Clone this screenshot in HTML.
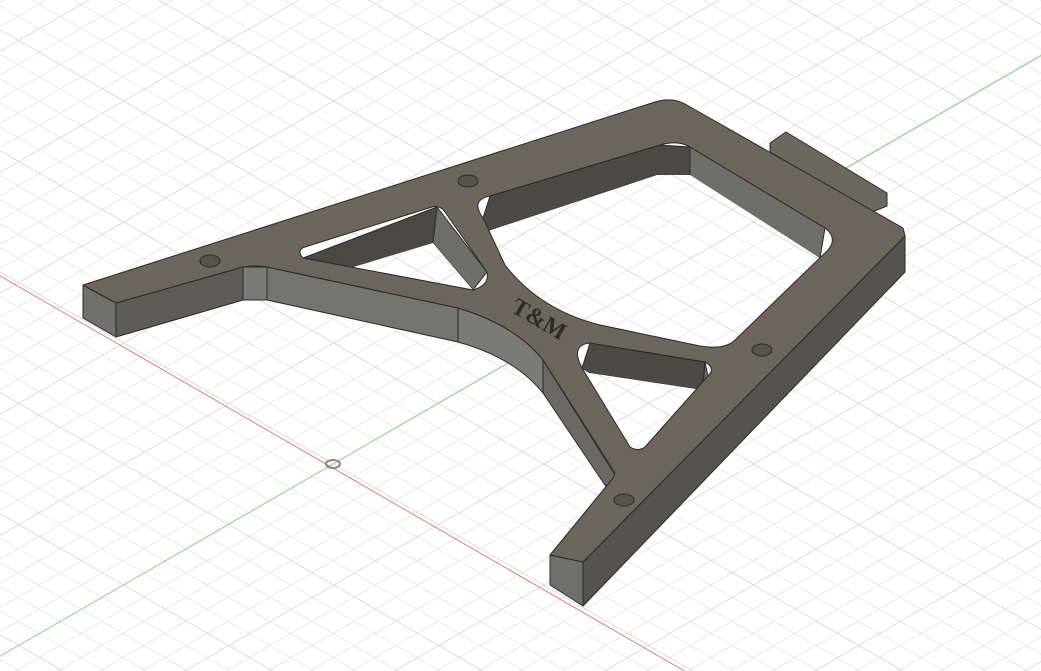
<!DOCTYPE html>
<html><head><meta charset="utf-8"><style>
html,body{margin:0;padding:0;background:#fff;overflow:hidden}
svg{display:block}
</style></head><body>
<svg width="1041" height="671" viewBox="0 0 1041 671" xmlns="http://www.w3.org/2000/svg">
<defs>
<pattern id="g" width="5" height="5" patternUnits="userSpaceOnUse" patternTransform="matrix(21 12.1 21 -12.1 333 464)">
<rect width="5" height="5" fill="#ffffff"/>
<path d="M1 0V5M2 0V5M3 0V5M4 0V5M0 1H5M0 2H5M0 3H5M0 4H5" stroke="#ebebeb" stroke-width="0.05" fill="none"/>
<path d="M0 0V5M0 0H5" stroke="#cccccc" stroke-width="0.06" fill="none"/>
</pattern>
</defs>
<rect width="1041" height="671" fill="url(#g)"/>
<line x1="-10" y1="270" x2="700" y2="680" stroke="#e08080" stroke-width="1"/>
<line x1="-10" y1="662" x2="1050" y2="50" stroke="#90d890" stroke-width="1"/>
<ellipse cx="333" cy="464" rx="7" ry="4" fill="none" stroke="#888" stroke-width="2"/>

<g stroke="#2a2a28" stroke-width="1" stroke-linejoin="round">
<polygon points="770,143 786,132 887,193 887,206 872,212 770,152" fill="#6b6860"/>
<polygon points="83,285 116,303 116,337 83,318" fill="#6f6f6c"/>
<polygon points="116,303 243,267 243,300 116,337" fill="#5e5c57"/>
<polygon points="243,267 267,267 267,300 243,300" fill="#7a7a77"/>
<polygon points="267,267 458,308 458,342 267,300" fill="#747471"/>
<path d="M458,308 Q515,325 543,360 L543,393 Q515,358 458,342 Z" fill="#7a7a76"/>
<polygon points="543,360 615,475 613,497 543,393" fill="#6a6965"/>
<polygon points="550,555 583,562 583,606 550,585" fill="#6f6f6c"/>
<polygon points="583,562 905,236 905,272 583,606" fill="#55534e"/>
<polygon points="303,258 437,207 437,243 350,268" fill="#4a4843"/>
<polygon points="437,207 487,272 473,290 433,243" fill="#6e6e6b"/>
<polygon points="350,268 433,243 473,290" fill="url(#g)" stroke="none"/>
<polygon points="483,218 490,196 660,145 690,147 690,178 657,175 485,232" fill="#4c4a45"/>
<polygon points="690,147 825,228 820,258 690,178" fill="#6e6e6b"/>
<path d="M485,232 L657,175 L690,175 L820,258 L727,348 L700,346 L600,325 Q540,310 505,265 Z" fill="url(#g)" stroke="none"/>
<polygon points="582,368 590,343 705,362 703,390 590,373" fill="#4c4a45"/>
<polygon points="705,362 708,376 703,390" fill="#6e6e6b"/>
<polygon points="590,373 703,390 645,447 630,447" fill="url(#g)" stroke="none"/>
<path fill-rule="evenodd" fill="#6c675d" d="
M83,285 L655,102 Q672,97 685,104 L903,228 L905,236 L583,562 L550,555 L613,478 L615,473 L543,360 Q515,325 458,308 L267,267 Q255,265 243,267 L116,303 Z
M303,258 Q296,250 305,247 L432,207 Q440,205 445,212 L487,272 Q490,285 473,290 Z
M483,218 Q470,200 490,196 L660,145 Q678,140 690,147 L825,228 Q838,238 828,250 L735,340 Q725,350 700,346 L600,325 Q540,310 505,265 Z
M582,368 Q570,345 590,343 L705,362 Q716,368 708,376 L645,447 Q638,452 630,447 Z"/>
<ellipse cx="210" cy="261" rx="10" ry="6" fill="#57544c"/>
<ellipse cx="468" cy="181" rx="10" ry="6" fill="#57544c"/>
<ellipse cx="762" cy="350" rx="10" ry="6" fill="#57544c"/>
<ellipse cx="624" cy="500" rx="10" ry="6" fill="#57544c"/>
</g>
<text x="0" y="0" transform="translate(538,321) rotate(30)" font-family="Liberation Serif, serif" font-weight="bold" font-size="24" fill="#2e2c28" text-anchor="middle" dominant-baseline="middle">T&amp;M</text>
</svg>
</body></html>
